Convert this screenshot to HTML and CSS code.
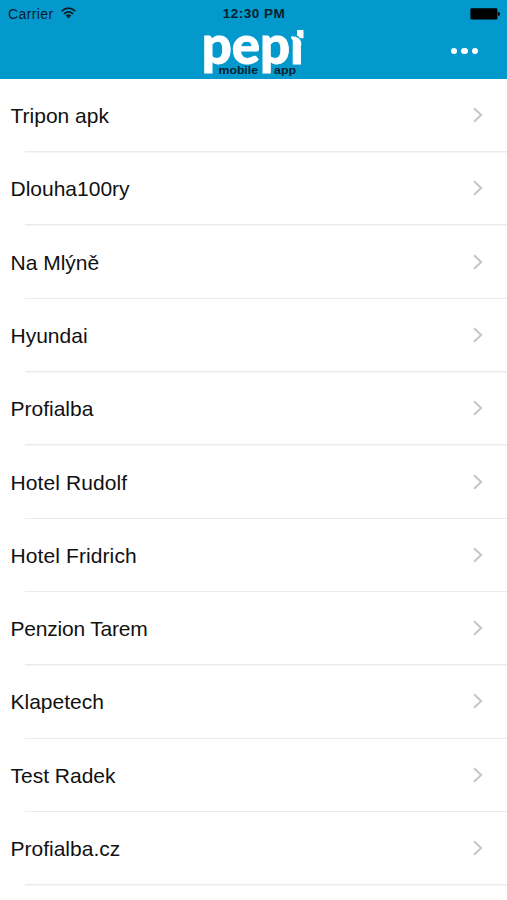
FILE: index.html
```
<!DOCTYPE html>
<html lang="cs">
<head>
<meta charset="utf-8">
<meta name="viewport" content="width=device-width">
<title>Pepi mobile app</title>
<link rel="stylesheet" href="styles.css">
</head>
<body>
<header class="header">
  <div class="status">
    <div class="carrier"><span>Carrier</span>
      <svg class="wifi" width="15" height="12" viewBox="0 0 15 12"><g fill="none" stroke="currentColor" stroke-width="1.7"><path d="M.7 4.2Q7.5-2 14.3 4.2M3 6.8Q7.5 2.8 12 6.8"/></g><path d="M4.7 8.6Q7.5 6.1 10.3 8.6L7.5 11.5Z" fill="currentColor"/></svg>
    </div>
    <time class="time">12:30 PM</time>
    <svg class="battery" width="30" height="12" viewBox="0 0 30 12"><rect x=".4" y=".3" width="27" height="11.2" rx="1.2"/><path d="M28 4q2 0 2 1.9t-2 1.9z"/></svg>
  </div>
  <div class="nav">
    <svg class="logo" width="102" height="52" viewBox="0 0 102 52">
      <defs><clipPath id="logo-clip"><path d="M0 8H88V15H102V48H0Z"/></clipPath></defs>
      <g clip-path="url(#logo-clip)"><text class="wordmark" x="-1.3" y="37" textLength="102" lengthAdjust="spacingAndGlyphs">pepi</text></g>
      <path class="flag" d="M94 3H100.5V11.2H97.2Q94.6 8.8 94 8.5Z"/>
      <path class="flag" d="M88.2 9.2Q98.6 9.2 98.6 18H90.2Q90.2 12.5 88.2 11.5Z"/>
      <text class="tagline" x="15.5" y="47" textLength="39.5" lengthAdjust="spacingAndGlyphs">mobile</text>
      <text class="tagline" x="71" y="47" textLength="22" lengthAdjust="spacingAndGlyphs">app</text>
    </svg>
    <button class="more" aria-label="Menu"><i></i><i></i><i></i></button>
  </div>
</header>
<main class="list">
  <a class="row"><span>Tripon apk</span><svg class="chevron" viewBox="0 0 10 16"><path d="M1 1.2 8.2 8 1 14.8"/></svg></a>
  <a class="row"><span>Dlouha100ry</span><svg class="chevron" viewBox="0 0 10 16"><path d="M1 1.2 8.2 8 1 14.8"/></svg></a>
  <a class="row"><span>Na Mlýně</span><svg class="chevron" viewBox="0 0 10 16"><path d="M1 1.2 8.2 8 1 14.8"/></svg></a>
  <a class="row"><span>Hyundai</span><svg class="chevron" viewBox="0 0 10 16"><path d="M1 1.2 8.2 8 1 14.8"/></svg></a>
  <a class="row"><span>Profialba</span><svg class="chevron" viewBox="0 0 10 16"><path d="M1 1.2 8.2 8 1 14.8"/></svg></a>
  <a class="row"><span class="loose">Hotel Rudolf</span><svg class="chevron" viewBox="0 0 10 16"><path d="M1 1.2 8.2 8 1 14.8"/></svg></a>
  <a class="row"><span class="loose">Hotel Fridrich</span><svg class="chevron" viewBox="0 0 10 16"><path d="M1 1.2 8.2 8 1 14.8"/></svg></a>
  <a class="row"><span class="tight">Penzion Tarem</span><svg class="chevron" viewBox="0 0 10 16"><path d="M1 1.2 8.2 8 1 14.8"/></svg></a>
  <a class="row"><span>Klapetech</span><svg class="chevron" viewBox="0 0 10 16"><path d="M1 1.2 8.2 8 1 14.8"/></svg></a>
  <a class="row"><span>Test Radek</span><svg class="chevron" viewBox="0 0 10 16"><path d="M1 1.2 8.2 8 1 14.8"/></svg></a>
  <a class="row"><span>Profialba.cz</span><svg class="chevron" viewBox="0 0 10 16"><path d="M1 1.2 8.2 8 1 14.8"/></svg></a>
</main>
</body>
</html>
```
FILE: styles.css
```
* { box-sizing: border-box; }
body {
  margin: 0;
  height: 900px;
  overflow: hidden;
  background: #fff;
  color: #111;
  font-family: "Liberation Sans", Arial, sans-serif;
}
.header { height: 79.4px; background: #0399cd; }
.status {
  height: 27px;
  display: grid;
  grid-template-columns: 1fr auto 1fr;
  align-items: center;
  padding: 0 7px 0 8px;
  color: #06202c;
  font-size: 13.5px;
}
.carrier { display: flex; align-items: center; gap: 7px; }
.carrier span { width: 46px; font-size: 14px; letter-spacing: .4px; }
.wifi { margin-top: -2px; }
.time { font-weight: bold; font-size: 13.5px; letter-spacing: .5px; }
.battery { justify-self: end; fill: #000; }
.nav {
  height: 52px;
  display: grid;
  grid-template-columns: 1fr 102px 1fr;
  align-items: start;
}
.logo { grid-column: 2; display: block; font-weight: bold; }
.wordmark { font-family: Lato, sans-serif; font-weight: 900; font-size: 54px; fill: #fff; stroke: #fff; stroke-width: .9; }
.flag { fill: #fff; }
.tagline { font-size: 11.5px; fill: #05202c; }
.more {
  grid-column: 3;
  justify-self: end;
  display: flex;
  gap: 4px;
  margin: 20.5px 28.7px 0 0;
  padding: 0;
  border: 0;
  background: none;
}
.more i { width: 6.6px; height: 6.6px; border-radius: 50%; background: #fff; }
.row {
  height: 73.3px;
  display: flex;
  align-items: center;
  justify-content: space-between;
  padding: 0 24.5px 0 10.5px;
  font-size: 21px;
  background: linear-gradient(#ebebeb, #ebebeb) 25px 100% / 100% 1.5px no-repeat;
}
.loose { letter-spacing: .1px; }
.tight { letter-spacing: -.2px; }
.chevron { width: 10px; height: 16px; margin-top: -2px; fill: none; stroke: #c5c5c9; stroke-width: 2; }
```
